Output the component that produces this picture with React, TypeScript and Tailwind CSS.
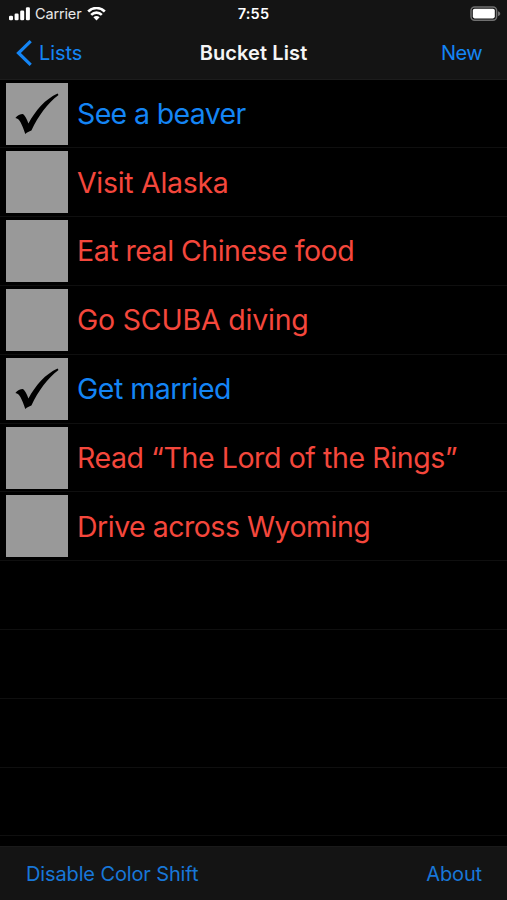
import { clsx } from "clsx";

type Item = { label: string; done?: boolean; tracking: string };

const items: Item[] = [
  { label: "See a beaver", done: true, tracking: "tracking-[-0.65px]" },
  { label: "Visit Alaska", tracking: "tracking-[-0.3px]" },
  { label: "Eat real Chinese food", tracking: "tracking-[-0.5px]" },
  { label: "Go SCUBA diving", tracking: "tracking-[-0.2px]" },
  { label: "Get married", done: true, tracking: "tracking-[-0.5px]" },
  { label: "Read “The Lord of the Rings”", tracking: "tracking-[-0.4px]" },
  { label: "Drive across Wyoming", tracking: "tracking-[-0.5px]" },
];

const emptyRows = 4;

function SignalIcon() {
  return (
    <svg width="22" height="14" viewBox="0 0 22 14" fill="#fff">
      <rect x="0" y="8.8" width="4" height="4.4" rx="1.2" />
      <rect x="5.6" y="6.5" width="4" height="6.7" rx="1.2" />
      <rect x="11.2" y="3.6" width="4" height="9.6" rx="1.2" />
      <rect x="16.9" y="0.3" width="4" height="12.9" rx="1.2" />
    </svg>
  );
}

function WifiIcon() {
  return (
    <svg width="19" height="14" viewBox="0 0 19 14" fill="none" stroke="#fff" strokeWidth="2.6">
      <path d="M1.2 4.5C5.8-.1 13.2-.1 17.8 4.5" />
      <path d="M4.2 7.8c2.9-2.9 7.7-2.9 10.6 0" />
      <path d="M9.5 13.4 6.4 10.3c1.7-1.7 4.5-1.7 6.2 0Z" fill="#fff" stroke="none" />
    </svg>
  );
}

function BatteryIcon() {
  return (
    <svg width="31" height="16" viewBox="0 0 31 16">
      <rect x="1" y="1" width="25.6" height="13.2" rx="3.6" fill="none" stroke="#707070" strokeWidth="1.5" />
      <rect x="2.8" y="2.8" width="22" height="9.6" rx="1.8" fill="#fff" />
      <path d="M28 5.2c3 .8 3 4 0 4.8Z" fill="#707070" />
    </svg>
  );
}

function CheckMark() {
  return (
    <svg width="62" height="62" viewBox="0 0 62 62" fill="#000">
      <path d="M51.6 10.4 52.5 12C41.5 20.5 32.5 32.5 25.4 47.6 23 48.4 21.2 49.4 19.3 50.9 17.8 46.5 16.2 42.3 14.4 39 13.1 36.6 11.7 35.2 9.4 34.9 11.3 32.8 14.2 31.1 17 31.1 19.4 32.9 20.9 36.5 22.4 40.6 29.8 26.6 39.4 16.1 51.6 10.4Z" />
    </svg>
  );
}

function ListRow({ item }: { item?: Item }) {
  return (
    <li className="flex h-[68.8px] shrink-0 items-center border-b border-[#0f0f0f] pl-1.5">
      {item && (
        <>
          <span className="h-[62px] w-[62px] shrink-0 bg-[#999]">
            {item.done && <CheckMark />}
          </span>
          <span
            className={clsx(
              "ml-[9px] mt-px whitespace-nowrap text-[28.5px] leading-none",
              item.tracking,
              item.done ? "text-[#1485f5]" : "text-[#f4473c]",
            )}
          >
            {item.label}
          </span>
        </>
      )}
    </li>
  );
}

export default function App() {
  return (
    <div className="flex h-[900px] w-[507px] flex-col overflow-hidden bg-black font-['Inter',sans-serif]">
      <header className="flex h-[79.7px] shrink-0 flex-col border-b border-[#1c1c1c] bg-[#141414]">
        <div className="grid h-[27px] grid-cols-3 items-center text-white">
          <div className="flex items-center pl-[9px]">
            <SignalIcon />
            <span className="ml-[4px] mr-[6px] mt-px text-[14.5px] leading-none tracking-[-0.15px] text-[#e8e8e8]">
              Carrier
            </span>
            <WifiIcon />
          </div>
          <span className="text-center text-[14.5px] font-semibold tracking-[0.2px]">7:55</span>
          <div className="flex justify-end pr-[6px]">
            <BatteryIcon />
          </div>
        </div>
        <nav className="grid h-[51.4px] grid-cols-3 items-center text-[20px] text-[#1485f5]">
          <button className="flex items-center pl-4">
            <svg width="17" height="26" viewBox="0 0 17 26" fill="none" stroke="currentColor" strokeWidth="3.2">
              <path d="M14.7 1.2 2.5 13l12.2 11.8" />
            </svg>
            <span className="ml-[6px] tracking-[-0.1px]">Lists</span>
          </button>
          <h1 className="whitespace-nowrap text-center font-semibold tracking-[0.1px] text-[#f5f5f5]">Bucket List</h1>
          <button className="pr-[25px] text-right tracking-[-0.6px]">New</button>
        </nav>
      </header>
      <ul className="flex min-h-0 flex-1 flex-col overflow-hidden">
        {items.map((item) => (
          <ListRow key={item.label} item={item} />
        ))}
        {Array.from({ length: emptyRows }, (_, i) => (
          <ListRow key={i} />
        ))}
      </ul>
      <footer className="flex h-[54px] shrink-0 items-center justify-between border-t border-[#1a1a1a] bg-[#141414] pr-[25px] pl-[26px] text-[20px] tracking-[-0.13px] text-[#1877d8]">
        <button>Disable Color Shift</button>
        <button>About</button>
      </footer>
    </div>
  );
}
